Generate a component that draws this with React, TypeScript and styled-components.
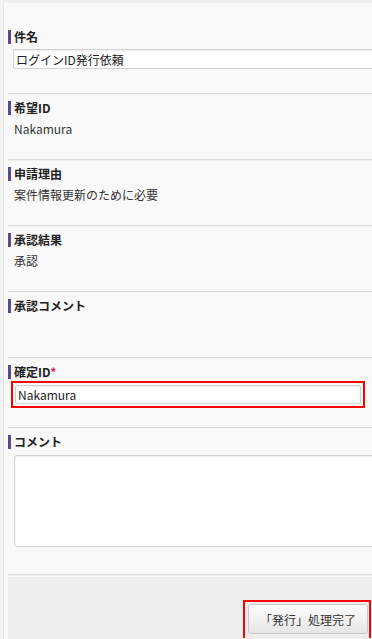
import React, { useState } from 'react';
import styled, { createGlobalStyle } from 'styled-components';

const GlobalStyle = createGlobalStyle`
  html, body {
    margin: 0;
    padding: 0;
    background: #f4f4f4;
    overflow: hidden;
  }
  body {
    font-family: "Noto Sans CJK JP", "Noto Sans", sans-serif;
    font-size: 12px;
    color: #222;
  }
`;

const Page = styled.div`
  padding-left: 3px;
  width: 372px;
  height: 639px;
  box-sizing: border-box;
`;

const Panel = styled.div`
  background: #f9f9f9;
  border-left: 1px solid #e6e6e6;
  border-top: 3px solid #efefef;
  padding-left: 4px;
  height: 100%;
  box-sizing: border-box;
  display: flex;
  flex-direction: column;
`;

type SectionSize = 'first' | 'normal' | 'field' | 'tall';

const sectionHeights: Record<SectionSize, string> = {
  first: '63px',
  normal: '58px',
  field: '62px',
  tall: '139px',
};

const Section = styled.div<{ $size?: SectionSize }>`
  padding-top: ${p => (p.$size === 'first' ? '27px' : '6px')};
  min-height: ${p => sectionHeights[p.$size || 'normal']};
  border-bottom: 1px solid #dcdcdc;
  box-shadow: 0 1px 0 #f0f0f0;
  margin-bottom: 1px;
  display: flex;
  flex-direction: column;
`;

const Label = styled.div`
  border-left: 3px solid #5b4b8c;
  padding-left: 3px;
  height: 14px;
  line-height: 14px;
  font-weight: bold;
  color: #222;
  white-space: nowrap;
`;

const Required = styled.span`
  color: #d0204a;
  font-weight: bold;
`;

const Value = styled.div`
  padding-left: 6px;
  margin-top: 7px;
  line-height: 14px;
  color: #333;
`;

const TextInput = styled.input`
  margin: 5px 0 0 5px;
  width: 380px;
  height: 20px;
  box-sizing: border-box;
  border: 1px solid #d2d2d2;
  border-radius: 2px;
  box-shadow: inset 0 1px 2px rgba(0, 0, 0, 0.08);
  background: #fff;
  padding: 0 2px;
  font-family: "Noto Sans CJK JP", "Noto Sans", sans-serif;
  font-size: 12px;
  color: #222;
  outline: none;
`;

const Highlight = styled.div`
  margin: 2px 0 0 3px;
  border: 2px solid #ff0000;
  padding: 2px;
  width: 354px;
  box-sizing: border-box;
`;

const HighlightedInput = styled(TextInput)`
  margin: 0;
  width: 100%;
  height: 19px;
`;

const TextArea = styled.textarea`
  margin: 6px 0 0 6px;
  width: 380px;
  height: 92px;
  box-sizing: border-box;
  border: 1px solid #d2d2d2;
  border-radius: 3px;
  box-shadow: inset 0 1px 2px rgba(0, 0, 0, 0.08);
  background: #fff;
  resize: none;
  outline: none;
  font-family: "Noto Sans CJK JP", "Noto Sans", sans-serif;
  font-size: 12px;
`;

const Footer = styled.div`
  flex: 1;
  margin-top: 1px;
  background: #eeeeee;
  display: flex;
  justify-content: flex-end;
  align-items: flex-start;
  padding-top: 23px;
  padding-right: 1px;
`;

const ButtonFrame = styled.div`
  border: 2px solid #ff0000;
  border-bottom: none;
  padding: 2px 1px 0 3px;
  width: 128px;
  height: 38px;
  box-sizing: border-box;
`;

const Button = styled.button`
  width: 100%;
  height: 30px;
  border: 1px solid #c8c8c8;
  border-radius: 3px;
  background: linear-gradient(#fdfdfd, #e6e6e6);
  font-family: "Noto Sans CJK JP", "Noto Sans", sans-serif;
  font-size: 12px;
  color: #333;
  cursor: pointer;
  padding: 0;
`;

function App() {
  const [title, setTitle] = useState('ログインID発行依頼');
  const [fixedId, setFixedId] = useState('Nakamura');
  const [comment, setComment] = useState('');

  return (
    <Page>
      <GlobalStyle />
      <Panel>
        <Section $size="first">
          <Label>件名</Label>
          <TextInput value={title} onChange={e => setTitle(e.target.value)} />
        </Section>
        <Section>
          <Label>希望ID</Label>
          <Value>Nakamura</Value>
        </Section>
        <Section>
          <Label>申請理由</Label>
          <Value>案件情報更新のために必要</Value>
        </Section>
        <Section>
          <Label>承認結果</Label>
          <Value>承認</Value>
        </Section>
        <Section>
          <Label>承認コメント</Label>
        </Section>
        <Section $size="field">
          <Label>
            確定ID<Required>*</Required>
          </Label>
          <Highlight>
            <HighlightedInput value={fixedId} onChange={e => setFixedId(e.target.value)} />
          </Highlight>
        </Section>
        <Section $size="tall">
          <Label>コメント</Label>
          <TextArea value={comment} onChange={e => setComment(e.target.value)} />
        </Section>
        <Footer>
          <ButtonFrame>
            <Button>「発行」処理完了</Button>
          </ButtonFrame>
        </Footer>
      </Panel>
    </Page>
  );
}

export default App;
